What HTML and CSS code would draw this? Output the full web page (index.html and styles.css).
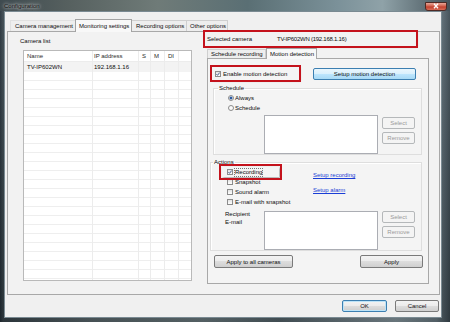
FILE: index.html
```html
<!DOCTYPE html>
<html>
<head>
<meta charset="utf-8">
<title>Configuration</title>
<link rel="stylesheet" href="styles.css">
</head>
<body>
<div class="window">
  <div class="titlebar">
    <span class="title">Configuration</span>
    <span class="close"><svg viewBox="0 0 8 6" width="8" height="6"><path d="M2 0.8 L6 5.2 M6 0.8 L2 5.2" stroke="#fff" stroke-width="1.3" fill="none"/></svg></span>
  </div>
  <div class="client">
    <div class="tabs">
      <div class="tab t1">Camera management</div>
      <div class="tab t2 sel">Monitoring settings</div>
      <div class="tab t3">Recording options</div>
      <div class="tab t4">Other options</div>
    </div>
    <div class="panel">
      <div class="leftcol">
        <div class="camlist-lbl">Camera list</div>
        <div class="list">
          <div class="lrow lhead"><span>Name</span><span>IP address</span><span>S</span><span>M</span><span>DI</span><span></span></div>
          <div class="lrow lsel"><span>TV-IP602WN</span><span>192.168.1.16</span><span></span><span></span><span></span><span></span></div>
          <div class="lrow lfill"><span></span><span></span><span></span><span></span><span></span><span></span></div>
        </div>
      </div>
      <div class="rightcol">
        <div class="selcam hl"><span class="sc-lbl">Selected camera</span><span class="sc-val">TV-IP602WN (192.168.1.16)</span></div>
        <div class="subtabs">
          <div class="stab st1">Schedule recording</div>
          <div class="stab st2 sel">Motion detection</div>
        </div>
        <div class="subpanel">
          <div class="mrow">
            <div class="enable hl"><span class="chk"><svg viewBox="0 0 6 6" width="4" height="4"><path d="M0.6 3.1 L2.3 5 L5.4 0.9" stroke="#23407c" stroke-width="1.2" fill="none"/></svg></span>Enable motion detection</div>
            <button class="btn hot setup">Setup motion detection</button>
          </div>
          <fieldset class="grp sched">
            <legend>Schedule</legend>
            <div class="opt"><span class="radio on"></span>Always</div>
            <div class="opt"><span class="radio"></span>Schedule</div>
            <div class="listrow">
              <div class="tbox"></div>
              <div class="sidebtns">
                <button class="btn dis sel-btn">Select</button>
                <button class="btn dis rem-btn">Remove</button>
              </div>
            </div>
          </fieldset>
          <fieldset class="grp actions">
            <legend>Actions</legend>
            <div class="actrow">
              <div class="checks">
                <div class="opt rec hl"><span class="chk"><svg viewBox="0 0 6 6" width="4" height="4"><path d="M0.6 3.1 L2.3 5 L5.4 0.9" stroke="#23407c" stroke-width="1.2" fill="none"/></svg></span><span class="focus">Recording</span></div>
                <div class="opt"><span class="chk"></span>Snapshot</div>
                <div class="opt"><span class="chk"></span>Sound alarm</div>
                <div class="opt"><span class="chk"></span>E-mail with snapshot</div>
              </div>
              <div class="links">
                <a class="link l1">Setup recording</a>
                <a class="link l2">Setup alarm</a>
              </div>
            </div>
            <div class="listrow recip">
              <div class="rlabel">Recipient<br>E-mail</div>
              <div class="tbox"></div>
              <div class="sidebtns">
                <button class="btn dis sel-btn">Select</button>
                <button class="btn dis rem-btn">Remove</button>
              </div>
            </div>
          </fieldset>
          <div class="bottomrow">
            <button class="btn applyall">Apply to all cameras</button>
            <button class="btn apply">Apply</button>
          </div>
        </div>
      </div>
    </div>
    <div class="footer">
      <button class="btn def ok">OK</button>
      <button class="btn cancel">Cancel</button>
    </div>
  </div>
</div>
</body>
</html>
```

FILE: styles.css
```css
* { box-sizing: border-box; }
html, body { margin: 0; padding: 0; }
body {
  width: 450px; height: 322px; overflow: hidden;
  font-family: "Liberation Sans", Arial, sans-serif;
  font-size: 6px; color: #0c0c0c; background: #2c3a42;
}
.window {
  width: 450px; height: 322px;
  display: flex; flex-direction: column;
  padding: 0 8px 4px 4px;
  background:
    linear-gradient(to bottom, rgba(255,255,255,0.06) 0, rgba(0,0,0,0.25) 100%),
    linear-gradient(to right, #25313a 0, #3a474e 3px, #5d6b70 20%, #6f7f84 45%, #56666d 62%, #8b9ca4 88%, #6d7e87 97%, #3d4b53 100%);
}
.titlebar {
  height: 11px; flex: none;
  display: flex; align-items: center; justify-content: space-between;
  margin: 0 -8px 0 -4px; padding: 0 3px 0 4px;
  background: linear-gradient(to right, #3e4a4f 0, #56605f 15%, #6f7b78 35%, #5a6f74 55%, #7b9199 75%, #8fa2a8 85%, #45535a 100%);
}
.title { color: #101010; text-shadow: 0 0 3px rgba(255,255,255,0.95), 0 0 5px rgba(255,255,255,0.7); font-size: 6px; }
.close {
  width: 22px; height: 9px; margin-top: 1px;
  display: flex; align-items: center; justify-content: center;
  border: 1px solid #4e2a25; border-radius: 0 0 3px 3px;
  background: linear-gradient(to bottom, #e9a799 0, #d0604c 45%, #c1402e 55%, #d86d58 100%);
}
.client {
  flex: 1;
  background: #f0f0f0;
  border: 1px solid #7a8a92;
  padding: 7px 2px 0 2px;
  display: flex; flex-direction: column;
}
.tabs { display: flex; height: 12px; margin-left: 3px; align-items: flex-end; }
.tab {
  height: 11px; line-height: 10px; padding-left: 4px;
  border: 1px solid #cfcfcf; border-bottom: none;
  background: #eeeeee; margin-right: -1px; white-space: nowrap;
}
.tab.sel {
  height: 13px; line-height: 12px; background: #f8f8f8;
  border-color: #a3a3a3; position: relative; z-index: 2; margin-bottom: -1px;
  padding-left: 3px;
}
.t1 { width: 66px; border-color: #e0e0e0; }
.t2 { width: 57px; }
.t3 { width: 56px; }
.t4 { width: 42px; padding-left: 3px; }
.panel {
  width: 433px; height: 264px; flex: none;
  border: 1px solid #a8a8a8; background: #f2f2f2;
  display: flex;
}
.leftcol { width: 195px; flex: none; }
.camlist-lbl { margin: 4px 0 0 12px; line-height: 10px; }
.list {
  margin: 4px 0 0 15px; width: 169px; height: 231px;
  border: 1px solid #b9b9b9; background: #fff;
  display: flex; flex-direction: column;
}
.lrow { display: grid; grid-template-columns: 69px 46px 12px 14px 14px 1fr; height: 10px; line-height: 10px; flex: none; }
.lrow span { border-right: 1px solid #ececec; padding-left: 3px; white-space: nowrap; overflow: hidden; }
.lrow span:last-child { border-right: none; }
.lrow span:nth-child(2) { padding-left: 1px; }
.lhead span { color: #2a2a2a; }
.lsel { background: #f3f3f3; border-top: 1px solid #ececec; height: 11px; }
.lfill {
  flex: 1; height: auto;
  background: repeating-linear-gradient(to bottom, transparent 0, transparent 8px, #eeeeee 8px, #eeeeee 9px);
}
.rightcol { flex: 1; display: flex; flex-direction: column; }
.hl { outline: 2px solid #c4121c; box-shadow: 1px 1px 2px rgba(0,0,0,0.35); }
.selcam {
  margin-left: 2px; width: 211px; height: 14px; line-height: 14px;
  display: flex; padding-left: 2px; position: relative; z-index: 3;
}
.sc-lbl { width: 70px; }
.sc-val { letter-spacing: -0.25px; }
.subtabs { display: flex; margin: 2px 0 0 4px; height: 10px; align-items: flex-end; }
.stab {
  height: 9px; line-height: 8px; padding-left: 3px;
  border: 1px solid #cfcfcf; border-bottom: none; background: #eeeeee; white-space: nowrap;
}
.st1 { width: 59px; }
.st2 { width: 51px; }
.stab.sel { height: 11px; line-height: 10px; background: #f8f8f8; border-color: #a8a8a8; margin-bottom: -1px; position: relative; z-index: 2; }
.subpanel {
  margin-left: 4px; width: 222px; height: 226px; flex: none;
  border: 1px solid #a8a8a8; background: #f4f4f4;
  display: flex; flex-direction: column;
}
.mrow { display: flex; align-items: center; margin-top: 8px; }
.enable {
  margin-left: 4px; width: 87px; height: 13px;
  display: flex; align-items: center; padding-left: 3px;
}
.chk {
  width: 6px; height: 6px; flex: none;
  border: 1px solid #8c8c8c; background: linear-gradient(#e3e3e3, #fdfdfd);
  margin-right: 2px; display: flex; align-items: center; justify-content: center;
}
.radio {
  width: 6px; height: 6px; flex: none; border-radius: 50%;
  border: 1px solid #8c8c8c; background: #fafafa; margin-right: 1px;
}
.radio.on { background: radial-gradient(circle, #2c5aa0 0, #2c5aa0 1.2px, #fafafa 1.8px); }
.btn {
  font: inherit; color: #111; padding: 0; margin: 0;
  height: 12px; line-height: 10px;
  border: 1px solid #7a7a7a; border-radius: 2px;
  background: linear-gradient(to bottom, #f3f3f3 0, #ebebeb 50%, #dddddd 50%, #cfcfcf 100%);
  display: flex; align-items: center; justify-content: center; white-space: nowrap;
}
.btn.hot {
  border-color: #3c7fb1;
  background: linear-gradient(to bottom, #eaf6fd 0, #d9f0fc 50%, #bee6fd 50%, #a7d9f5 100%);
}
.btn.dis { border-color: #b5b8ba; background: #f4f4f4; color: #9a9a9a; }
.btn.def { border-color: #3c7fb1; box-shadow: inset 0 0 0 1px #bde3f7; }
.setup { margin-left: 14px; width: 103px; }
fieldset.grp {
  border: 1px solid #dedede; padding: 0; min-width: 0;
  box-shadow: inset 1px 1px 0 #fff;
}
fieldset.grp legend { padding: 0 1px; line-height: 10px; }
.sched { margin: 3px 0 0 5px; width: 209px; padding-bottom: 5px; }
.sched legend { margin-left: 4px; }
.opt { display: flex; align-items: center; height: 10px; white-space: nowrap; }
.sched .opt { padding-left: 14px; }
.listrow { display: flex; margin: 2px 0 0 50px; }
.tbox { width: 114px; height: 39px; border: 1px solid #abadb3; background: #fff; flex: none; }
.sidebtns { margin-left: 4px; display: flex; flex-direction: column; }
.sidebtns .btn { width: 33px; }
.sel-btn { margin-top: 2px; }
.rem-btn { margin-top: 3px; }
.recip .sel-btn { margin-top: 0; }
.actions { margin: 2px 0 0 2px; width: 212px; padding: 2px 0 3px 0; }
.actions legend { margin-left: 2px; }
.actrow { display: flex; }
.checks { margin-left: 11px; width: 91px; flex: none; }
.checks .opt { padding-left: 5px; }
.checks .rec { width: 57px; outline-offset: 1px; }
.focus { outline: 1px dotted #777; outline-offset: 0; line-height: 7px; }
.links { display: flex; flex-direction: column; }
.link { color: #1a3ed6; text-decoration: underline; line-height: 10px; }
.l1 { margin-top: 3px; }
.l2 { margin-top: 5px; }
.recip { margin: 4px 0 0 14px; }
.rlabel { width: 39px; line-height: 8px; margin-top: -1px; flex: none; }
.bottomrow { display: flex; margin: 4px 5px 0 6px; justify-content: space-between; }
.bottomrow .btn { height: 13px; }
.applyall { width: 79px; }
.apply { width: 63px; }
.footer { display: flex; justify-content: flex-end; margin-top: 5px; padding-right: 0; gap: 8px; }
.ok { width: 45px; }
.cancel { width: 44px; }
```
